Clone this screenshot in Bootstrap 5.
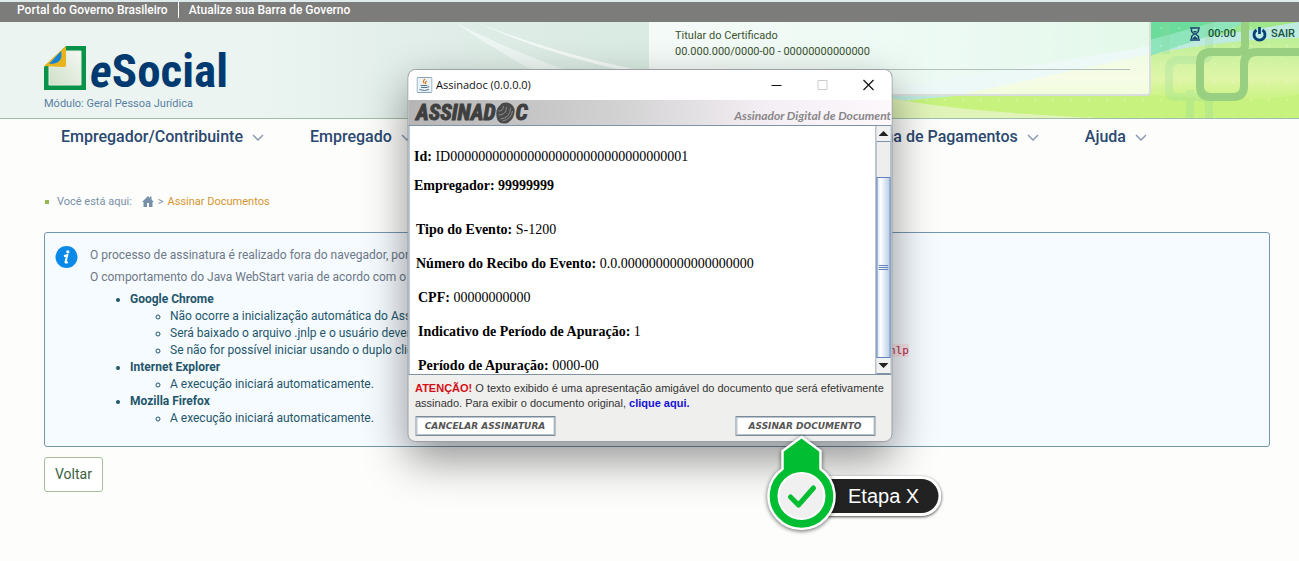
<!DOCTYPE html>
<html lang="pt-BR">
<head>
<meta charset="utf-8">
<meta name="viewport" content="width=device-width, initial-scale=1">
<title>eSocial - Assinar Documentos</title>
<link rel="stylesheet" href="https://cdn.jsdelivr.net/npm/bootstrap@5.3.0/dist/css/bootstrap.min.css">
<style>
  body { font-family: Roboto, "Liberation Sans", sans-serif; font-size: 12px; line-height: 17px; background: #fdfdfc; color: #24566b; }
  a { text-decoration: none; }
  .gov-bar { background: #7c7c7a; border-top: 2px solid #dfeaea; height: 22px; padding-left: 17px; }
  .gov-bar a { color: #fff; font-weight: 500; line-height: 16px; }
  .gov-bar a + a { border-left: 1px solid #fff; margin-left: 10px; padding-left: 10px; }
  .site-header { height: 97px; background: #ebf4f0; border-bottom: 1px solid #9dbfa9; overflow: hidden; }
  .brand { padding: 24px 0 0 44px; }
  .brand-name { font: bold 47px/50px "Roboto Condensed", "Open Sans Condensed", Lato, sans-serif; color: #003a70; }
  .brand-module { color: #5a7fa3; font-size: 11px; line-height: 16px; }
  .cert-panel { width: 502px; height: 74px; background: rgba(255,255,255,.72); border: solid #d9dfdb; border-width: 0 2px 2px 0; border-radius: 0 0 4px 0; padding: 6px 19px 0 26px; color: #3b5230; font-size: 11px; line-height: 16px; }
  .cert-panel div:last-child { border-bottom: 1px solid #b4c0bd; height: 10px; }
  .session { width: 148px; padding: 3px 4px 0 0; font-weight: 500; font-size: 11px; }
  .session, .session a { color: #17533c; }
  .menu { padding: 4px 152px 0 61px; }
  .menu a { color: #2b486f; font-size: 16px; font-weight: 500; line-height: 28px; }
  .menu svg { margin-left: 9px; }
  .menu-group { gap: 46px; }
  .page-body { padding: 42px 29px 0 44px; }
  .crumbs { color: #7790a6; font-size: 11px; line-height: 17px; margin-bottom: 22px; }
  .crumbs a, .crumbs .here { color: #d4952f; }
  .crumbs a { margin: 0 4px 0 10px; }
  .crumb-dot { width: 4px; height: 4px; background: #94b754; margin: 0 8px 0 1px; }
  .notice { background: #f6fbff; border: 1px solid #7397ae; border-radius: 3px; padding: 11px 10px 19px; gap: 12px; margin-bottom: 10px; }
  .notice p { color: #6d7887; line-height: 22px; margin: 0; }
  .notice ul { margin: 0; padding-left: 40px; }
  .notice p + ul { margin-top: 3px; }
  .notice code { font: 11px/16px "DejaVu Sans Mono", monospace; color: #b8274f; background: #fbe9ec; }
  .back-btn { font-size: 14px; line-height: 21px; padding: 6px 10px; border: 1px solid #a6bf9b; border-radius: 3px; background: #fff; color: #3c6141; }

  .app-window { width: 485px; top: 69px; border: 1px solid #9aa0a3; border-radius: 8px; background: #efefee; box-shadow: 0 18px 44px rgba(0,0,0,.42); color: #111; }
  .title-bar { height: 30px; background: #fff; border-radius: 8px 8px 0 0; padding: 0 17px 0 8px; font: 11px/16px "Open Sans", sans-serif; }
  .title-bar button { border: 0; background: none; padding: 0; display: flex; }
  .title-buttons { gap: 34px; }
  .banner { height: 25px; background: linear-gradient(90deg, #b5b5b5, #d4d3d4 45%, #f4eff4 75%, #fcf8fc); padding-left: 8px; overflow: hidden; }
  .banner-logo { font: italic bold 22px/25px "Roboto Condensed", Lato, sans-serif; color: #3f3f3f; -webkit-text-stroke: 1px #3f3f3f; }
  .banner-sub { font: italic bold 12px/14px Lato, sans-serif; color: #8a868a; padding-top: 9px; white-space: nowrap; }
  .doc-pane { height: 250px; border: 1px solid #7f93a5; border-right: 0; background: #fff; }
  .doc-text { font: 14px/16px "Liberation Serif", serif; color: #000; padding: 23px 0 0 5px; overflow: hidden; }
  .doc-text p { margin: 0 0 18px; white-space: nowrap; }
  .doc-text .doc-head { margin-bottom: 13px; }
  .doc-text .doc-head + .doc-head { margin-bottom: 28px; }
  .lvl-1 { padding-left: 2px; }
  .lvl-2 { padding-left: 4px; }
  .scroll-track { width: 16px; border: solid #7f93a5; border-width: 0 1px; background: #eee; }
  .scroll-track button { height: 16px; border: 0; border-bottom: 1px solid #7f93a5; background: #f1f1f1; padding: 0; display: flex; align-items: center; justify-content: center; }
  .scroll-thumb { height: 181px; border: 1px solid #6382bf; background: linear-gradient(90deg, #d5e4f2, #fff 25%, #b8cfe5); }
  .warn { font: 11px/15px "Liberation Sans", sans-serif; color: #333; padding: 6px 2px 5px 7px; margin: 0; }
  .warn b { color: #d40f14; }
  .warn a { color: #1512d8; font-weight: bold; }
  .app-actions { padding: 0 16px 5px 7px; }
  .app-actions button { width: 140px; height: 20px; padding: 0; border: 1px solid #7b8b9a; box-shadow: inset 0 0 0 1px #b9c3cc; background: #fff; font: italic bold 9px/16px "DejaVu Sans", sans-serif; color: #555; }
  .step { left: 358px; top: 365px; }
  .step-pin { filter: drop-shadow(0 1px 2px rgba(0,0,0,.6)); }
  .step-label { margin: 41px 0 0 -16px; height: 40px; padding: 0 19px 0 28px; border: 3px solid #fff; border-left: 0; border-radius: 0 20px 20px 0; background: #222; color: #fff; font: 20px/34px "Liberation Sans", sans-serif; box-shadow: 0 1px 3px rgba(0,0,0,.7); white-space: nowrap; }
</style>
</head>
<body class="position-relative min-vh-100">

<div class="gov-bar d-flex align-items-start">
  <a href="#">Portal do Governo Brasileiro</a>
  <a href="#">Atualize sua Barra de Governo</a>
</div>

<header class="site-header position-relative">
  <svg class="position-absolute top-0 start-0 w-100 h-100" viewBox="0 0 1299 96" preserveAspectRatio="xMaxYMin slice" aria-hidden="true">
    <defs>
      <linearGradient id="sky"><stop offset=".2" stop-color="#ebf4f0"/><stop offset=".34" stop-color="#e0ede8"/><stop offset=".5" stop-color="#d9ebe2"/><stop offset=".72" stop-color="#bcebd6"/><stop offset=".87" stop-color="#9fe8b4"/><stop offset="1" stop-color="#9fe77e"/></linearGradient>
      <linearGradient id="leaf" x1="0" y1="0" x2="0" y2="1"><stop offset="0" stop-color="#bdef97"/><stop offset=".5" stop-color="#dff5a8"/><stop offset="1" stop-color="#b9f262"/></linearGradient>
      <pattern id="dots" width="18" height="18" patternUnits="userSpaceOnUse"><circle cx="9" cy="6" r=".7" fill="#fff" opacity=".6"/></pattern>
    </defs>
    <rect width="1299" height="96" fill="url(#sky)"/>
    <path d="M454 0Q530 38 590 56H548Q500 32 454 0z" fill="#edf6f2"/>
    <path d="M476 0Q560 34 660 52L640 52Q550 34 476 0z" fill="#f5faf9"/>
    <path d="M700 96Q930 60 1299 0V96z" fill="#bfeadf"/>
    <path d="M850 96Q1010 62 1150 32Q1240 16 1299 16V96z" fill="url(#leaf)"/>
    <path d="M1150 0h66L1150 18z" fill="#6bdc9c"/>
    <path d="M1150 18L1216 0h34L1150 34z" fill="#8ee5bb"/>
    <path d="M890 80Q1040 64 1151 73T1299 72V96H890z" fill="#c6f27d"/>
    <path d="M890 76Q960 90 1100 96H820z" fill="#e0f3b8"/>
    <rect x="860" width="439" height="96" fill="url(#dots)"/>
    <g fill="none" stroke-width="8">
      <g stroke="#8fd6a0" opacity=".25"><path d="M1209 0v30q0 8-8 8h-22q-10 0-10 10v20q0 7 7 7h26q7 0 7 7v14M1166 0v32M1190 68v28"/></g>
      <path d="M1245 0v23q0 7-7 7h-27q-11 0-11 11v23q0 11 11 11h22q11 0 11-11V43q0-13 13-13h42" stroke="#98cf80"/>
    </g>
  </svg>

  <div class="position-relative d-flex justify-content-between">
    <div class="brand">
      <div class="d-flex align-items-start">
        <svg width="42" height="44" viewBox="0 0 42 44" class="me-1" aria-hidden="true">
          <defs><linearGradient id="pg" x1="0" y1="1" x2="1" y2="0"><stop offset="0" stop-color="#cfdfc7"/><stop offset="1" stop-color="#f5f8f3"/></linearGradient></defs>
          <path d="M22 0H42V44H0V21z" fill="#08924a"/>
          <path d="M22 5H37V39H5V20H22z" fill="url(#pg)" stroke="#e4efe3"/>
          <path d="M22 0V19Q22 21 19 21L0 20z" fill="#e9b31c"/>
          <path d="M17 5Q20 18 5 18z" fill="#1485d6"/>
        </svg>
        <div class="brand-name"><i>e</i>Social</div>
      </div>
      <div class="brand-module">Módulo: Geral Pessoa Jurídica</div>
    </div>
    <div class="d-flex align-items-start">
      <div class="cert-panel">
        <div>Titular do Certificado</div>
        <div>00.000.000/0000-00 - 00000000000000</div>
        <div></div>
      </div>
      <div class="session d-flex align-items-center justify-content-end">
        <svg width="10" height="14" viewBox="0 0 10 14" class="me-1" aria-hidden="true"><path d="M0 1h10M0 13h10M1.500 2v2q0 1 3 3q-3 2-3 3v2M8.500 2v2q0 1-3 3q3 2 3 3v2" fill="none" stroke="#183e6f" stroke-width="1.500"/><path d="M3 4h4L5 6zM5 9l3 3H2z" fill="#183e6f"/></svg>
        <span class="ms-1">00:00</span>
        <a href="#" class="d-flex align-items-center ms-3"><svg width="15" height="16" viewBox="0 0 15 16" class="me-1" aria-hidden="true"><path d="M4.500 4a5.500 5.500 0 1 0 6 0M7.500 1v7" fill="none" stroke="#06427a" stroke-width="2.800"/></svg>SAIR</a>
      </div>
    </div>
  </div>
</header>

<nav class="menu d-flex justify-content-between">
  <div class="menu-group d-flex">
    <a href="#">Empregador/Contribuinte<svg width="12" height="7" viewBox="0 0 12 7" aria-hidden="true"><path d="M1 1l5 5 5-5" fill="none" stroke="#8b9bb5" stroke-width="1.500"/></svg></a>
    <a href="#">Empregado<svg width="12" height="7" viewBox="0 0 12 7" aria-hidden="true"><path d="M1 1l5 5 5-5" fill="none" stroke="#8b9bb5" stroke-width="1.500"/></svg></a>
  </div>
  <div class="menu-group d-flex">
    <a href="#">Folha de Pagamentos<svg width="12" height="7" viewBox="0 0 12 7" aria-hidden="true"><path d="M1 1l5 5 5-5" fill="none" stroke="#8b9bb5" stroke-width="1.500"/></svg></a>
    <a href="#">Ajuda<svg width="12" height="7" viewBox="0 0 12 7" aria-hidden="true"><path d="M1 1l5 5 5-5" fill="none" stroke="#8b9bb5" stroke-width="1.500"/></svg></a>
  </div>
</nav>

<main class="page-body">
  <div class="crumbs d-flex align-items-center">
    <span class="crumb-dot"></span><span>Você está aqui:</span>
    <a href="#" class="d-flex" aria-label="Início"><svg width="12" height="11" viewBox="0 0 12 11" aria-hidden="true"><path d="M6 0l2 2V.5h1.500V3.500L12 6h-1.500v5H7V7H5v4H1.500V6H0z" fill="#7891a8"/></svg></a>
    <span>&gt;</span><span class="here ms-1">Assinar Documentos</span>
  </div>

  <section class="notice d-flex align-items-start">
    <svg width="23" height="25" viewBox="0 0 23 25" class="flex-shrink-0" aria-hidden="true"><circle cx="11.500" cy="13" r="11" fill="#0a8ae8"/><circle cx="12.800" cy="7.800" r="1.600" fill="#fff"/><path d="M9 12l3.200-.8-1.700 6.800q0 1.200 2.200-.2" fill="none" stroke="#fff" stroke-width="2"/></svg>
    <div>
      <p>O processo de assinatura é realizado fora do navegador, por</p>
      <p>O comportamento do Java WebStart varia de acordo com o</p>
      <ul>
        <li><b class="fw-bold">Google Chrome</b>
          <ul>
            <li>Não ocorre a inicialização automática do Assinadoc.</li>
            <li>Será baixado o arquivo .jnlp e o usuário deverá</li>
            <li>Se não for possível iniciar usando o duplo clique, abra um terminal e execute este comando na pasta do arquivo: <code>javaws documento.jnlp</code></li>
          </ul>
        </li>
        <li><b class="fw-bold">Internet Explorer</b><ul><li>A execução iniciará automaticamente.</li></ul></li>
        <li><b class="fw-bold">Mozilla Firefox</b><ul><li>A execução iniciará automaticamente.</li></ul></li>
      </ul>
    </div>
  </section>
  <button type="button" class="back-btn">Voltar</button>
</main>

<div class="app-window position-absolute start-50 translate-middle-x" role="dialog" aria-label="Assinadoc">
  <div class="title-bar d-flex align-items-center">
    <svg width="16" height="16" viewBox="0 0 16 16" class="me-1" aria-hidden="true"><rect x=".5" y=".5" width="15" height="15" rx="1" fill="#edf2f6" stroke="#88a5bb"/><path d="M8.500 2q-3 2.500-.5 4.500M10.500 4q-2.500 1.500-1 3" fill="none" stroke="#e57b20" stroke-width="1.200"/><path d="M4 8.500h6.500M4.500 10.500h6M3 12.500q5 2 9.500 0M11 9q2.500 0 0 2" fill="none" stroke="#4f7591"/></svg>
    <span class="flex-grow-1">Assinadoc (0.0.0.0)</span>
    <div class="title-buttons d-flex align-items-center">
      <button type="button" aria-label="Minimizar"><svg width="12" height="12" viewBox="0 0 12 12"><path d="M1 6.500h10" stroke="#111"/></svg></button>
      <button type="button" aria-label="Maximizar"><svg width="12" height="12" viewBox="0 0 12 12"><path d="M1.500 1.500h9v9h-9z" fill="none" stroke="#ccc"/></svg></button>
      <button type="button" aria-label="Fechar"><svg width="12" height="12" viewBox="0 0 12 12"><path d="M1 1l10 10M11 1L1 11" stroke="#111" stroke-width="1.200"/></svg></button>
    </div>
  </div>
  <div class="banner d-flex justify-content-between">
    <div class="banner-logo d-flex align-items-center">ASSINAD<svg width="20" height="22" viewBox="0 0 20 22" aria-hidden="true"><path d="M7 1q9-2 12 6 1 9-7 14-7 2-10-3-4-11 5-17z" fill="#4a4a4a"/><path d="M5 17q10-1 10-11M3 13q8 0 8-8M7 19q9-2 10-10M3 9q5 0 5-5" fill="none" stroke="#8a8a8a"/></svg>C</div>
    <div class="banner-sub">Assinador Digital de Document</div>
  </div>
  <div class="doc-pane d-flex">
    <div class="doc-text flex-grow-1">
      <p class="doc-head"><b>Id:</b> ID0000000000000000000000000000000001</p>
      <p class="doc-head"><b>Empregador: 99999999</b></p>
      <p class="lvl-1"><b>Tipo do Evento:</b> S-1200</p>
      <p class="lvl-1"><b>Número do Recibo do Evento:</b> 0.0.0000000000000000000</p>
      <p class="lvl-2"><b>CPF:</b> 00000000000</p>
      <p class="lvl-2"><b>Indicativo de Período de Apuração:</b> 1</p>
      <p class="lvl-2"><b>Período de Apuração:</b> 0000-00</p>
    </div>
    <div class="scroll-track d-flex flex-column flex-shrink-0">
      <button type="button" aria-label="Rolar para cima"><svg width="10" height="5" viewBox="0 0 10 5"><path d="M5 0l5 5H0z" fill="#222"/></svg></button>
      <div class="scroll-thumb mt-auto d-flex align-items-center justify-content-center"><svg width="10" height="6" viewBox="0 0 10 6" aria-hidden="true"><path d="M0 .5h10M0 2.500h10M0 4.500h10" stroke="#6382bf"/></svg></div>
      <button type="button" aria-label="Rolar para baixo"><svg width="10" height="5" viewBox="0 0 10 5"><path d="M0 0h10L5 5z" fill="#222"/></svg></button>
    </div>
  </div>
  <p class="warn"><b>ATENÇÃO!</b> O texto exibido é uma apresentação amigável do documento que será efetivamente assinado. Para exibir o documento original, <a href="#">clique aqui.</a></p>
  <div class="app-actions d-flex justify-content-between">
    <button type="button">CANCELAR ASSINATURA</button>
    <button type="button">ASSINAR DOCUMENTO</button>
  </div>

  <div class="step position-absolute d-flex align-items-start">
    <svg class="step-pin position-relative z-1 flex-shrink-0" width="70" height="96" viewBox="0 0 70 96" aria-hidden="true">
      <path d="M35 2L54 16V34A33 33 0 1 1 16 34V16z" fill="#00bd32" stroke="#fff" stroke-width="2.500" stroke-linejoin="round"/>
      <circle cx="35" cy="61" r="23" fill="#f0f0f0" stroke="#fff" stroke-width="2"/>
      <path d="M24 62l8 8 15-17" fill="none" stroke="#00bd32" stroke-width="5" stroke-linecap="round" stroke-linejoin="round"/>
    </svg>
    <div class="step-label">Etapa X</div>
  </div>
</div>

<script src="https://cdn.jsdelivr.net/npm/bootstrap@5.3.0/dist/js/bootstrap.bundle.min.js"></script>
</body>
</html>
